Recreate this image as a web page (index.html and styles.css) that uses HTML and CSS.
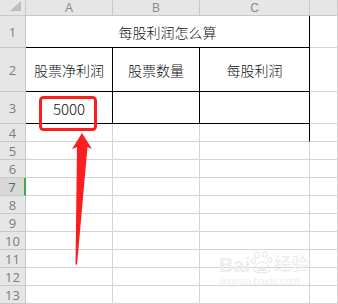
FILE: index.html
```html
<!DOCTYPE html>
<html lang="zh">
<head>
<meta charset="utf-8">
<link rel="stylesheet" href="styles.css">
</head>
<body>
<div class="sheet">
  <div class="corner"><span class="tri"></span></div>
  <div class="colh">A</div>
  <div class="colh">B</div>
  <div class="colh">C</div>
  <div class="colh"></div>

  <div class="rowh">1</div>
  <div class="cell title tb-r tb-b">每股利润怎么算</div>
  <div class="cell"></div>

  <div class="rowh">2</div>
  <div class="cell tb-r tb-b">股票净利润</div>
  <div class="cell tb-r tb-b">股票数量</div>
  <div class="cell tb-r tb-b">每股利润</div>
  <div class="cell"></div>

  <div class="rowh">3</div>
  <div class="cell tb-r tb-b num">5000</div>
  <div class="cell tb-r tb-b"></div>
  <div class="cell tb-r tb-b"></div>
  <div class="cell"></div>

  <div class="rowh">4</div><div class="cell"></div><div class="cell"></div><div class="cell tb-r"></div><div class="cell"></div>
  <div class="rowh">5</div><div class="cell"></div><div class="cell"></div><div class="cell"></div><div class="cell"></div>
  <div class="rowh">6</div><div class="cell"></div><div class="cell"></div><div class="cell"></div><div class="cell"></div>
  <div class="rowh sel">7</div><div class="cell"></div><div class="cell"></div><div class="cell"></div><div class="cell"></div>
  <div class="rowh">8</div><div class="cell"></div><div class="cell"></div><div class="cell"></div><div class="cell"></div>
  <div class="rowh">9</div><div class="cell"></div><div class="cell"></div><div class="cell"></div><div class="cell"></div>
  <div class="rowh">10</div><div class="cell"></div><div class="cell"></div><div class="cell"></div><div class="cell"></div>
  <div class="rowh">11</div><div class="cell"></div><div class="cell"></div><div class="cell"></div><div class="cell"></div>
  <div class="rowh">12</div><div class="cell"></div><div class="cell"></div><div class="cell"></div><div class="cell"></div>
  <div class="rowh">13</div><div class="cell"></div><div class="cell"></div><div class="cell"></div><div class="cell"></div>
</div>

<svg class="annot" width="338" height="304" viewBox="0 0 338 304">
  <rect x="40.5" y="97.5" width="55" height="32" rx="3" ry="3" fill="none" stroke="#fb1e1e" stroke-width="3"/>
  <path d="M82 133 L92 149 L87.5 147 L77 265 L75.5 264 L77 147 L72 149 Z" fill="#fb1e1e"/>
</svg>

<div class="watermark">
  <div class="wm-line">
    <span class="wm-bai">Bai</span>
    <span class="wm-paw">
      <svg width="22" height="24" viewBox="0 0 22 24">
        <g fill="none" stroke="#e4e4e4" stroke-width="1">
          <ellipse cx="6" cy="4" rx="2.5" ry="3"/>
          <ellipse cx="14" cy="3.5" rx="2.5" ry="3"/>
          <ellipse cx="2.5" cy="10" rx="2" ry="2.5"/>
          <ellipse cx="19" cy="9" rx="2" ry="2.5"/>
          <path d="M3 20 Q4 11 11 11 Q18 11 19 20 Q11 24 3 20 Z"/>
        </g>
        <text x="11" y="20" text-anchor="middle" class="wm-du">du</text>
      </svg>
    </span>
    <span class="wm-jy">经验</span>
  </div>
  <div class="wm-url">jingyan.baidu.com</div>
</div>
</body>
</html>
```
FILE: styles.css
```css
* { box-sizing: border-box; margin: 0; padding: 0; }
html, body { width: 338px; height: 304px; overflow: hidden; background: #ffffff; }
body { position: relative; font-family: "Liberation Sans", "Noto Sans CJK SC", sans-serif; }

.sheet {
  display: grid;
  grid-template-columns: 26px 87px 87px 110px 28px;
  grid-template-rows: 16px 32px 44px 32px repeat(10, 18px);
}

.corner, .colh, .rowh {
  background: #e6e6e6;
  border-right: 1px solid #c9c9c9;
  border-bottom: 1px solid #c9c9c9;
  color: #8a8a8a;
  display: flex;
  align-items: center;
  justify-content: center;
}
.corner { position: relative; }
.tri {
  position: absolute;
  right: 4px;
  bottom: 4px;
  width: 0; height: 0;
  border-left: 11px solid transparent;
  border-bottom: 10px solid #bdbdbd;
}
.colh { font-size: 12px; padding-top: 1px; }
.rowh { font-family: "Open Sans", "Noto Sans", sans-serif; font-size: 13px; color: #7d7d7d; }
.rowh.sel { background: #d8d8d8; color: #4f6b5c; border-right: 2px solid #3bab4a; }

.cell {
  border-right: 1px solid #d4d4d4;
  border-bottom: 1px solid #d4d4d4;
  display: flex;
  align-items: center;
  justify-content: center;
  font-family: "Noto Sans CJK SC", sans-serif;
  font-weight: 300;
  font-size: 14px;
  color: #111;
}
.title { grid-column: 2 / 5; }
.tb-r { border-right-color: #000; }
.tb-b { border-bottom-color: #000; }
.num { font-size: 15px; padding-top: 1px; }

.annot { position: absolute; left: 0; top: 0; pointer-events: none; }

.watermark {
  position: absolute;
  left: 219px;
  top: 251px;
  width: 92px;
  color: #ececec;
  font-family: "Liberation Sans", "Noto Sans CJK SC", sans-serif;
}
.wm-line { display: flex; align-items: flex-end; gap: 1px; }
.wm-bai { font-size: 20px; font-weight: bold; line-height: 20px; color: #ededed; }
.wm-paw { display: block; height: 24px; }
.wm-paw svg { display: block; }
.wm-du { font-size: 7px; font-weight: bold; fill: #e2e2e2; }
.wm-jy { font-size: 17px; line-height: 20px; color: #eaeaea; }
.wm-url { font-size: 10px; color: #ededed; margin-top: 1px; }
```
